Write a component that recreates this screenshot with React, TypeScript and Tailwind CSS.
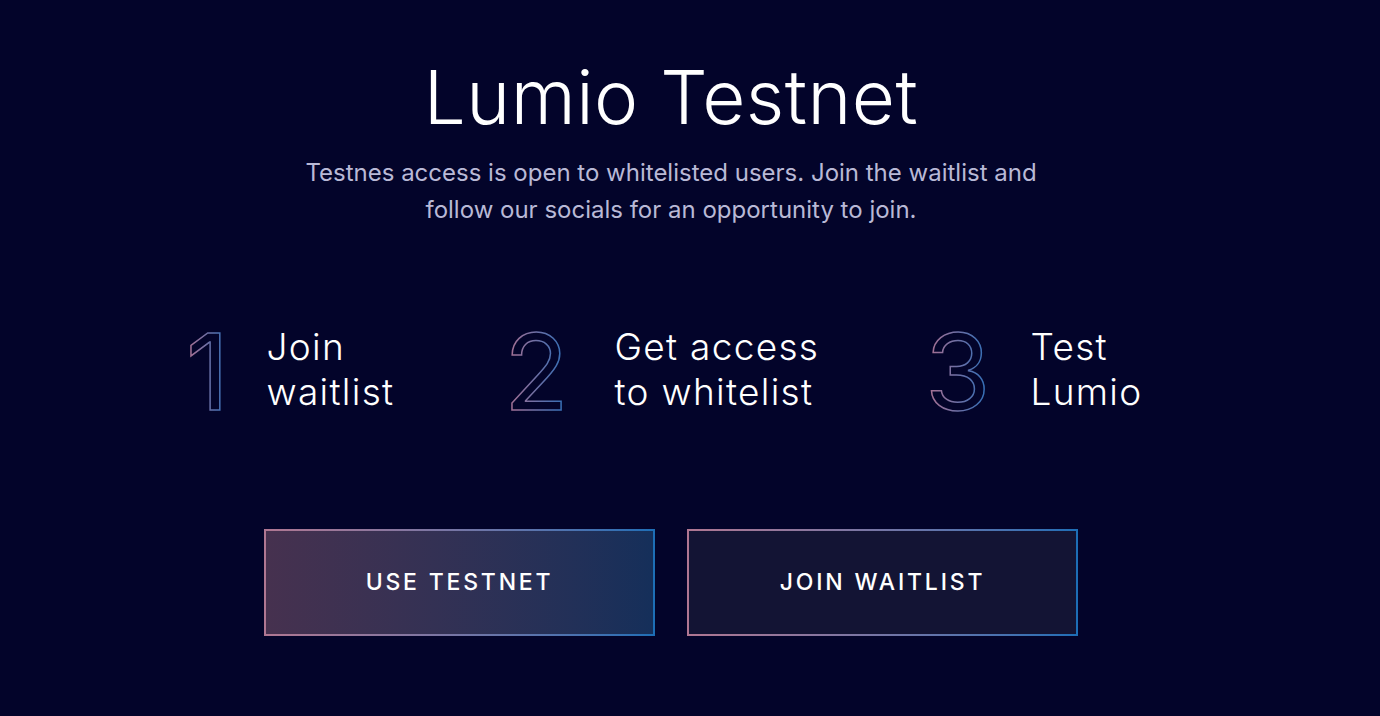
import React from "react";

const Digit = ({ d, w, dx }: { d: string; w: number; dx: number }) => (
  <svg width={w} height={96} viewBox={`0 0 ${w} 96`} className="shrink-0 -mt-[8px] overflow-visible">
    <defs>
      <linearGradient id={`g${d}`} x1="0" y1="0" x2="1" y2="0">
        <stop offset="0%" stopColor="#b0708f" />
        <stop offset="100%" stopColor="#2a6fba" />
      </linearGradient>
    </defs>
    <text
      x={dx}
      y={87}
      fontSize={106}
      fontFamily="Inter, 'Noto Sans', sans-serif"
      fontWeight={400}
      fill="none"
      stroke={`url(#g${d})`}
      strokeWidth={1.5}
    >
      {d}
    </text>
  </svg>
);

const Step = ({ d, w, dx, l1, l2 }: { d: string; w: number; dx: number; l1: string; l2: string }) => (
  <div className="flex items-start">
    <Digit d={d} w={w} dx={dx} />
    <div className="text-white text-[37px] leading-[45px] font-light tracking-[1.3px] -mt-[7px]">
      <div>{l1}</div>
      <div>{l2}</div>
    </div>
  </div>
);

export default function App() {
  return (
    <div
      className="w-full h-[716px] bg-[#03042a] overflow-hidden"
      style={{ fontFamily: "Inter, 'Noto Sans', sans-serif" }}
    >
      <div className="w-[1342px] flex flex-col items-center pt-[53px]">
        <h1 className="text-white text-[74.5px] leading-[88px] font-light tracking-[0.5px]">
          Lumio Testnet
        </h1>
        <p className="mt-[13px] text-[#b9b9d6] text-[24px] leading-[37px] text-center">
          Testnes access is open to whitelisted users. Join the waitlist and
          <br />
          follow our socials for an opportunity to join.
        </p>
        <div className="mt-[103px] grid grid-cols-[319px_421px_221px]">
          <Step d="1" w={76} dx={-5} l1="Join" l2="waitlist" />
          <Step d="2" w={105} dx={-6} l1="Get access" l2="to whitelist" />
          <Step d="3" w={100} dx={-6} l1="Test" l2="Lumio" />
        </div>
        <div className="mt-[110px] flex gap-[32px]">
          <div className="w-[391px] h-[107px] p-[2px] bg-gradient-to-r from-[#b07792] to-[#1c6eb6]">
            <div className="w-full h-full bg-gradient-to-r from-[#46314f] to-[#152f5a] flex items-center justify-center text-white text-[23px] font-medium tracking-[2.8px]">
              USE TESTNET
            </div>
          </div>
          <div className="w-[391px] h-[107px] p-[2px] bg-gradient-to-r from-[#b07792] to-[#1c6eb6]">
            <div className="w-full h-full bg-[#131434] flex items-center justify-center text-white text-[23px] font-medium tracking-[2.8px]">
              JOIN WAITLIST
            </div>
          </div>
        </div>
      </div>
    </div>
  );
}
